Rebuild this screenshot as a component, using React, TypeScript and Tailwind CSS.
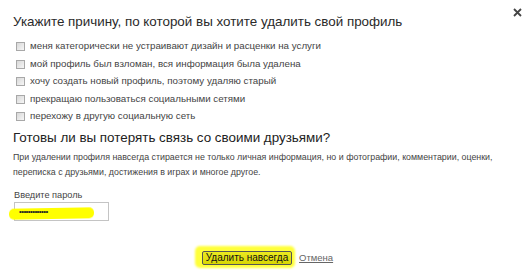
export default function App() {
  const reasons = [
    "меня категорически не устраивают дизайн и расценки на услуги",
    "мой профиль был взломан, вся информация была удалена",
    "хочу создать новый профиль, поэтому удаляю старый",
    "прекращаю пользоваться социальными сетями",
    "перехожу в другую социальную сеть",
  ];

  return (
    <div
      className="relative w-[530px] h-[278px] bg-white text-[#333] overflow-hidden"
      style={{ fontFamily: '"Liberation Sans", Arial, sans-serif' }}
    >
      {/* Close */}
      <svg className="absolute left-[513px] top-[8px]" width="9" height="9" viewBox="0 0 9 9">
        <path d="M1 1L8 8M8 1L1 8" stroke="#444" strokeWidth="1.8" />
      </svg>

      <div className="pl-[13px] pt-[14px]">
        <h1 className="text-[13.4px] leading-[16px] text-[#2a2a2a]">
          Укажите причину, по которой вы хотите удалить свой профиль
        </h1>

        {/* Reasons */}
        <div className="mt-[8px] flex flex-col pl-[3px]">
          {reasons.map((r) => (
            <label key={r} className="flex items-center gap-[5px] h-[17.5px] text-[9.75px] text-[#444]">
              <span className="w-[9px] h-[9px] border border-[#a8a8a8] bg-gradient-to-br from-[#d8d8d8] to-[#f6f6f6] shrink-0" />
              {r}
            </label>
          ))}
        </div>

        <h2 className="mt-[4px] text-[13.4px] leading-[16px] text-[#222]">
          Готовы ли вы потерять связь со своими друзьями?
        </h2>
        <p className="mt-[4px] text-[8.85px] leading-[15px] text-[#444] whitespace-nowrap">
          При удалении профиля навсегда стирается не только личная информация, но и фотографии, комментарии, оценки,
          <br />
          переписка с друзьями, достижения в играх и многое другое.
        </p>

        {/* Password */}
        <div className="mt-[9px] pl-[1px] text-[9.2px] text-[#444] leading-[12px]">Введите пароль</div>
        <div className="relative mt-[1px] ml-[1px] w-[95px] h-[19px] border border-[#c4c4c4]">
          <div className="absolute left-[-6px] top-[5px] w-[85px] h-[11px] bg-[#ffff00] rounded-[5px] -rotate-1 blur-[0.5px]" />
          <span className="relative block pl-[4px] text-[8px] leading-[17px] tracking-[-0.6px] text-[#222]">
            •••••••••••••
          </span>
        </div>

        {/* Actions */}
        <div className="mt-[30px] ml-[189px] flex items-center gap-[7px] leading-[14px]">
          <div className="relative flex">
            <div className="absolute -left-[7px] -right-[3px] -top-[5px] -bottom-[3px] bg-[#ffff3a] rounded-[5px] blur-[1px]" />
            <button className="relative block h-[14px] w-[90px] text-[10px] leading-[12px] text-[#111] bg-gradient-to-b from-[#ecea20] to-[#d8d600] border border-[#555] rounded-[2px]">
              Удалить навсегда
            </button>
          </div>
          <a className="text-[9.5px] leading-[12px] text-[#666] underline">Отмена</a>
        </div>
      </div>
    </div>
  );
}
